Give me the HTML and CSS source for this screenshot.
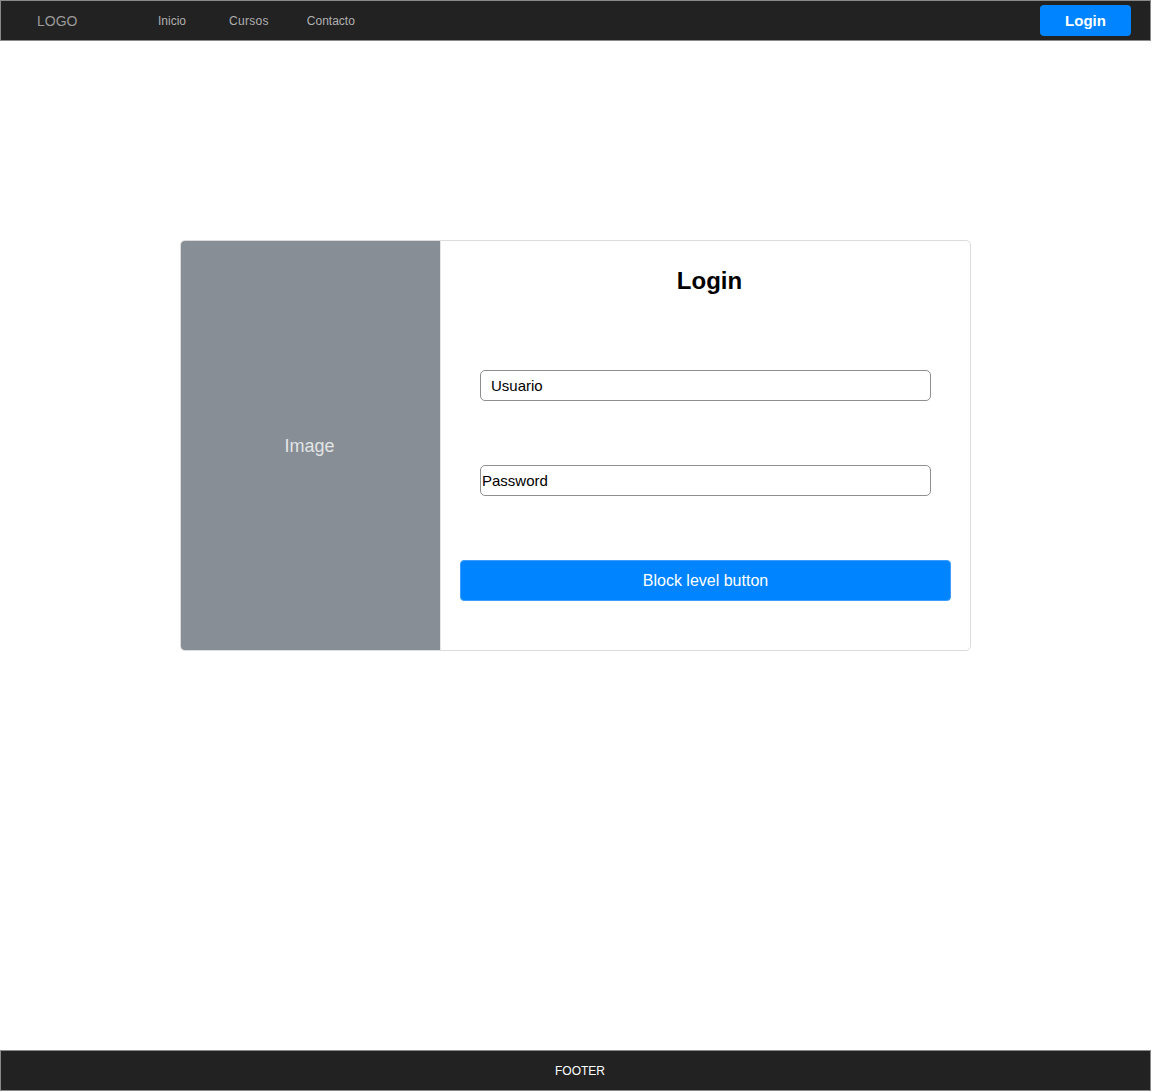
FILE: index.html
```html
<!DOCTYPE html>
<html lang="es">
<head>
<meta charset="utf-8">
<title>Login</title>
<link rel="stylesheet" href="styles.css">
</head>
<body>
<div class="page">
  <header class="topbar">
    <div class="logo">LOGO</div>
    <nav class="nav">
      <a class="nav-link" href="#">Inicio</a>
      <a class="nav-link" href="#">Cursos</a>
      <a class="nav-link" href="#">Contacto</a>
    </nav>
    <button class="login-btn">Login</button>
  </header>
  <main class="main">
    <div class="card">
      <div class="card-image">Image</div>
      <div class="card-body">
        <h1 class="title">Login</h1>
        <div class="field"><input class="input input-user" type="text" value="Usuario"></div>
        <div class="field field-pass"><input class="input input-pass" type="text" value="Password"></div>
        <button class="block-btn">Block level button</button>
      </div>
    </div>
  </main>
  <footer class="footer">FOOTER</footer>
</div>
</body>
</html>
```
FILE: styles.css
```css
* { box-sizing: border-box; }
html, body { margin: 0; padding: 0; background: #fff; }
body { font-family: "Liberation Sans", Arial, sans-serif; }
.page {
  width: 1151px;
  height: 1092px;
  display: flex;
  flex-direction: column;
}
.topbar {
  height: 41px;
  background: #222;
  border: 1px solid #8a8a8a;
  display: flex;
  align-items: center;
  padding: 0 19px 0 36px;
}
.logo {
  color: #9a9a9a;
  font-size: 14px;
  width: 121px;
}
.nav { display: flex; flex: 1; }
.nav-link {
  color: #b0b0b0;
  font-size: 12px;
  text-decoration: none;
  margin-right: 43px;
}
.nav-link:nth-child(2) { margin-right: 38px; letter-spacing: 0.3px; }
.login-btn {
  width: 91px;
  height: 31px;
  background: #0084ff;
  border: none;
  border-radius: 4px;
  color: #fff;
  font-family: "Liberation Sans", Arial, sans-serif;
  font-weight: bold;
  font-size: 15px;
  padding: 0;
  margin-top: -1px;
}
.main {
  flex: 1;
  padding-top: 199px;
  display: flex;
  justify-content: center;
  align-items: flex-start;
}
.card {
  width: 791px;
  height: 411px;
  border: 1px solid #dcdcdc;
  border-radius: 5px;
  overflow: hidden;
  display: flex;
}
.card-image {
  width: 260px;
  background: #878e95;
  color: #e2e4e6;
  font-size: 18px;
  display: flex;
  align-items: center;
  justify-content: center;
  padding: 2px 2px 0 0;
  border-right: 1px solid #e4e4e4;
  flex: none;
}
.card-body {
  flex: 1;
  padding: 26px 19px 0 19px;
  display: flex;
  flex-direction: column;
}
.title {
  margin: 0;
  font-size: 24px;
  line-height: 28px;
  font-weight: bold;
  text-align: center;
  padding-left: 8px;
  color: #000;
}
.field { padding: 0 20px; margin-top: 75px; }
.field-pass { margin-top: 64px; }
.input {
  display: block;
  width: 100%;
  height: 31px;
  border: 1px solid #8f8f8f;
  border-radius: 5px;
  font-family: "Liberation Sans", Arial, sans-serif;
  font-size: 15px;
  color: #000;
  background: #fff;
  outline: none;
}
.input-user { padding: 0 10px; }
.input-pass { padding: 0 1px; }
.block-btn {
  margin-top: 64px;
  height: 41px;
  width: 100%;
  background: #0084ff;
  border: 1px solid #3d9eff;
  border-radius: 4px;
  color: #fff;
  font-family: "Liberation Sans", Arial, sans-serif;
  font-size: 16px;
}
.footer {
  height: 41px;
  margin-bottom: 1px;
  background: #222;
  border: 1px solid #8a8a8a;
  color: #fff;
  font-size: 12px;
  display: flex;
  align-items: center;
  justify-content: center;
  padding-left: 9px;
}
```
